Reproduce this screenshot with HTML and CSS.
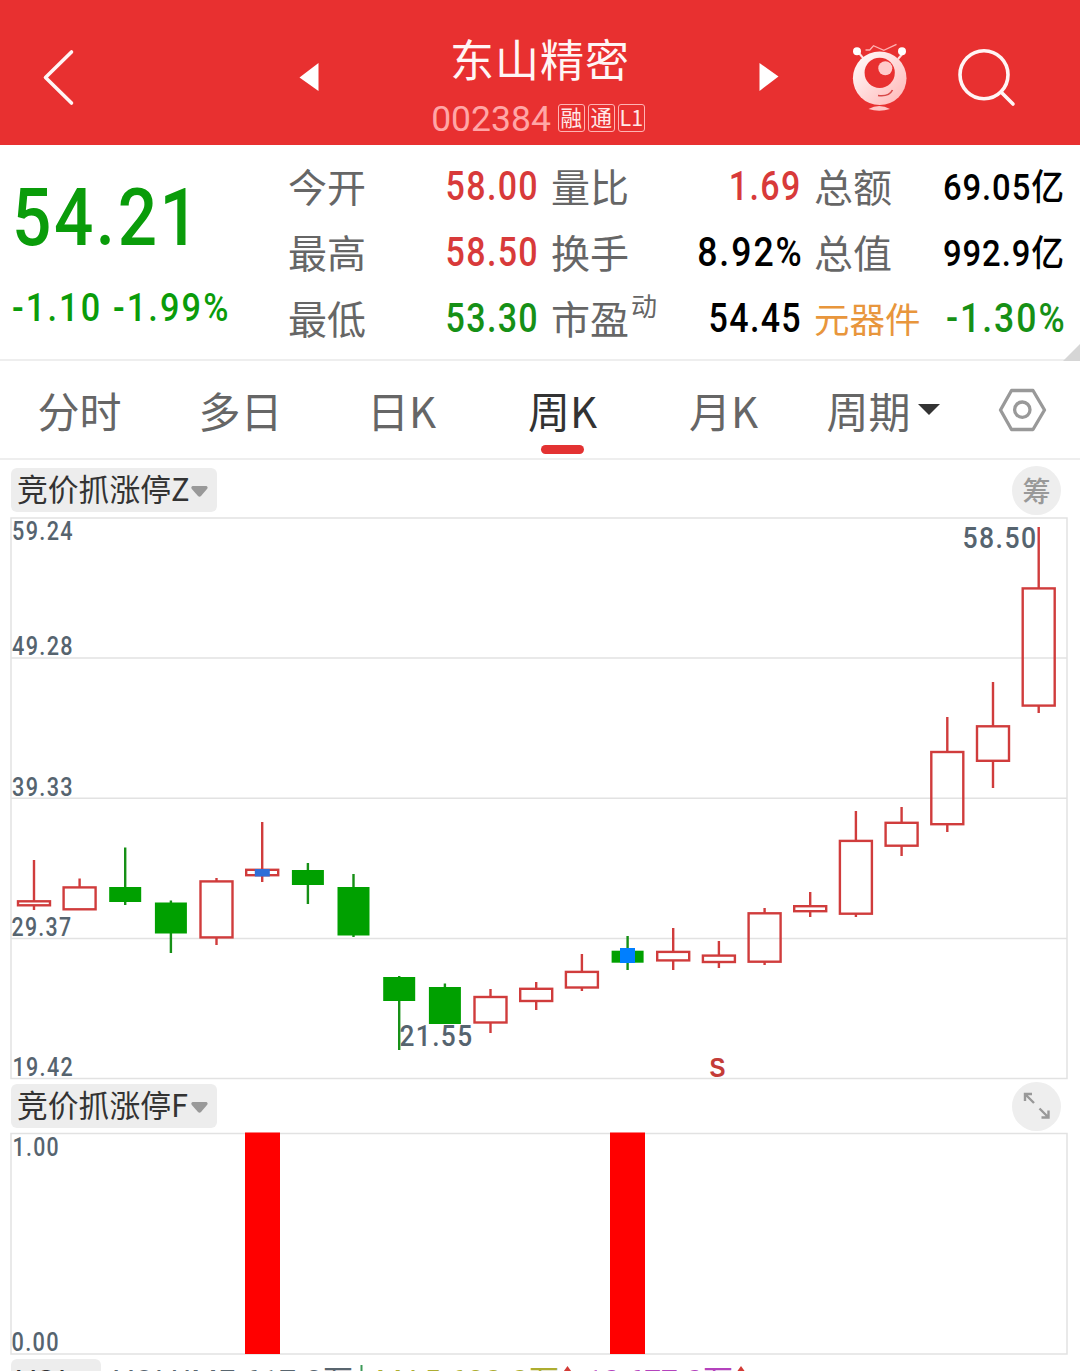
FILE: index.html
```html
<!DOCTYPE html>
<html lang="zh-CN">
<head>
<meta charset="utf-8">
<title>东山精密 002384</title>
<link rel="stylesheet" href="styles.css">
</head>
<body>
<header class="topbar">
  <svg class="back" width="36" height="145" viewBox="40 0 36 145"><path d="M71.5 52 45.5 77.5 71.5 103"/></svg>
  <svg class="prev" width="22" height="145" viewBox="298 0 22 145"><path d="M318.5 63v28L299.5 77.5z"/></svg>
  <div class="heading">
    <h1 class="name">东山精密</h1>
    <div class="sub"><span class="code">002384</span><span class="badge">融</span><span class="badge">通</span><span class="badge">L1</span></div>
  </div>
  <svg class="next" width="22" height="145" viewBox="758 0 22 145"><path d="M759.5 63v28L778.5 76.5z"/></svg>
  <svg class="mascot" width="60" height="145" viewBox="850 0 60 145">
    <defs><linearGradient id="skin" x1="0" y1="0" x2="1" y2="1"><stop offset="0" stop-color="#fff"/><stop offset="1" stop-color="#ffb4b4"/></linearGradient></defs>
    <path d="M865.5 50h4.2l3.8-4.3 10.3 4.6 12.7-6" fill="none" stroke="#ffb0b0" stroke-width="1.3"/>
    <path d="M858 52l6 7M904 52l-6 7" stroke="#ffe0e0" stroke-width="2"/>
    <circle cx="857" cy="51.2" r="4" fill="#fff"/><circle cx="902" cy="51.2" r="4" fill="#fff"/>
    <circle cx="879.7" cy="78.3" r="26.8" fill="url(#skin)"/>
    <circle cx="879.7" cy="72.8" r="15.1" fill="#e83030"/>
    <circle cx="885.3" cy="68.3" r="7" fill="#ffcaca"/>
    <path d="M878 95.5q11 1.5 14.5-5.5" fill="none" stroke="#d84848" stroke-width="1.6"/>
    <path d="M868.5 109q10.8-6 21.5 0-10.7 3.5-21.5 0z" fill="#ffc4c4"/>
  </svg>
  <svg class="search" width="60" height="145" viewBox="956 0 60 145"><circle cx="984" cy="74.7" r="24"/><path d="M1001 92l12 12"/></svg>
</header>

<section class="quote">
  <div class="last">
    <div class="price">54.21</div>
    <div class="change">-1.10 -1.99%</div>
  </div>
  <div class="stats">
    <div class="stat"><span class="label">今开</span><span class="num up">58.00</span></div>
    <div class="stat"><span class="label">量比</span><span class="num up">1.69</span></div>
    <div class="stat"><span class="label">总额</span><span class="num amount">69.05亿</span></div>
    <div class="stat"><span class="label">最高</span><span class="num up">58.50</span></div>
    <div class="stat"><span class="label">换手</span><span class="num percent">8.92%</span></div>
    <div class="stat"><span class="label">总值</span><span class="num amount">992.9亿</span></div>
    <div class="stat"><span class="label">最低</span><span class="num down">53.30</span></div>
    <div class="stat"><span class="label">市盈<sup>动</sup></span><span class="num">54.45</span></div>
    <div class="stat"><span class="label sector">元器件</span><span class="num percent down">-1.30%</span></div>
  </div>
  <i class="corner"></i>
</section>

<nav class="tabs">
  <span class="tab">分时</span>
  <span class="tab">多日</span>
  <span class="tab">日K</span>
  <span class="tab active">周K</span>
  <span class="tab">月K</span>
  <span class="tab period">周期<i class="caret"></i></span>
  <svg class="gear" width="50" height="46" viewBox="997 387 50 46"><path d="M1011.5 390.5h21.5L1044.5 410l-11.5 19.5h-21.5L1000.5 410z"/><circle cx="1022.3" cy="409.7" r="7.7"/></svg>
</nav>

<div class="panel-bar">
  <span class="chip">竞价抓涨停Z<svg width="17" height="11" viewBox="0 0 17 11"><path d="M1.5 0h14q2 1 .5 3L10 10q-1.5 1.5-3 0L.8 3Q-.5 1 1.5 0z"/></svg></span>
  <span class="round">筹</span>
</div>
<svg class="chart" width="1080" height="564" viewBox="0 516 1080 564">
  <g class="grid"><path d="M11 658H1067M11 798.2H1067M11 938.4H1067"/><rect x="11" y="518" width="1056" height="560.5"/></g>
  <g class="axis">
    <text x="12" y="540" textLength="62" lengthAdjust="spacingAndGlyphs">59.24</text>
    <text x="12" y="655" textLength="62" lengthAdjust="spacingAndGlyphs">49.28</text>
    <text x="12" y="796" textLength="62" lengthAdjust="spacingAndGlyphs">39.33</text>
    <text x="11.5" y="936" textLength="61" lengthAdjust="spacingAndGlyphs">29.37</text>
    <text x="12.5" y="1076" textLength="61.5" lengthAdjust="spacingAndGlyphs">19.42</text>
  </g>
  <g class="rise">
    <path d="M34 860V901M34 905V910"/><rect x="18" y="901.3" width="32" height="4"/>
    <path d="M79.6 878.5V888"/><rect x="63.6" y="887.4" width="32" height="21.9"/>
    <path d="M216.5 878V881M216.5 937V945"/><rect x="200.5" y="881.4" width="32" height="56"/>
    <path d="M262.2 822V870M262.2 875V882"/><rect x="246.2" y="869.8" width="32" height="5.4"/>
    <path d="M490.5 989V997M490.5 1022V1033"/><rect x="474.5" y="997" width="32" height="25.5"/>
    <path d="M536.2 982V989M536.2 1001V1010"/><rect x="520.2" y="988.8" width="32" height="12.2"/>
    <path d="M581.9 954V972M581.9 987V991"/><rect x="565.9" y="971.9" width="32" height="15.6"/>
    <path d="M673.2 928V952M673.2 960V970"/><rect x="657.2" y="951.9" width="32" height="8.5"/>
    <path d="M718.9 941V956M718.9 962V968"/><rect x="702.9" y="955.6" width="32" height="6.4"/>
    <path d="M764.6 908V913M764.6 962V965"/><rect x="748.6" y="913.3" width="32" height="48.4"/>
    <path d="M810.2 892V906M810.2 911V917"/><rect x="794.2" y="906.2" width="32" height="5"/>
    <path d="M855.9 811V841M855.9 914V917"/><rect x="839.9" y="840.9" width="32" height="72.8"/>
    <path d="M901.6 807V823M901.6 846V856"/><rect x="885.6" y="822.8" width="32" height="22.9"/>
    <path d="M947.3 717V752M947.3 824V832"/><rect x="931.3" y="752" width="32" height="72.2"/>
    <path d="M993 682V726M993 761V788"/><rect x="977" y="726.3" width="32" height="34.5"/>
    <path d="M1038.7 527V588M1038.7 706V713"/><rect x="1022.7" y="588.4" width="32" height="117.2"/>
  </g>
  <g class="fall">
    <path d="M125.2 847.5V905M170.9 900.5V953M307.9 863V904M353.5 874V937M399.2 976V1050M444.9 983.5V1020M627.6 936V970"/>
    <rect x="109.2" y="887" width="32" height="15"/>
    <rect x="154.9" y="902.5" width="32" height="31"/>
    <rect x="291.9" y="870" width="32" height="15"/>
    <rect x="337.5" y="887" width="32" height="48.5"/>
    <rect x="383.2" y="977" width="32" height="24"/>
    <rect x="428.9" y="987" width="32" height="37"/>
    <rect x="611.6" y="950.7" width="32" height="12"/>
  </g>
  <rect x="254.8" y="869" width="15" height="7.5" fill="#2f6ed8"/>
  <rect x="620" y="948" width="15" height="15" fill="#007fff"/>
  <g class="mark">
    <text x="962.5" y="548" textLength="75" lengthAdjust="spacingAndGlyphs">58.50</text>
    <text x="399.5" y="1046" textLength="74" lengthAdjust="spacingAndGlyphs">21.55</text>
  </g>
  <text class="signal" x="717.5" y="1077" textLength="16" lengthAdjust="spacingAndGlyphs">S</text>
</svg>

<div class="panel-bar second">
  <span class="chip">竞价抓涨停F<svg width="17" height="11" viewBox="0 0 17 11"><path d="M1.5 0h14q2 1 .5 3L10 10q-1.5 1.5-3 0L.8 3Q-.5 1 1.5 0z"/></svg></span>
  <span class="round"><svg width="28" height="28" viewBox="0 0 28 28"><path d="M11 11 2 2M2 9V2h7M16.5 16.5 25.5 25.5M25.5 18.5v7h-7"/></svg></span>
</div>
<svg class="chart" width="1080" height="224" viewBox="0 1132 1080 224">
  <g class="grid"><rect x="11" y="1133.5" width="1056" height="220.5"/></g>
  <path d="M245 1132.5h35v221.5h-35zM610 1132.5h35v221.5h-35z" fill="#f00"/>
  <g class="axis">
    <text x="12.5" y="1156" textLength="47.5" lengthAdjust="spacingAndGlyphs">1.00</text>
    <text x="11.5" y="1351" textLength="48.5" lengthAdjust="spacingAndGlyphs">0.00</text>
  </g>
</svg>

<footer class="volume">
  <span class="vol-chip">VOL</span>
  <svg class="readout" width="680" height="36" viewBox="101 1359 680 36">
    <text x="114" y="1391" textLength="239" fill="#59666f">VOLUME:617.2万</text>
    <path d="M361.5 1365v20" stroke="#3c9a58" stroke-width="2"/>
    <text x="376" y="1391" textLength="183" fill="#adad30">MA5:620.0万</text>
    <path d="M567.5 1366l-5 7h10z" fill="#d33b36"/>
    <text x="586" y="1391" textLength="147" fill="#b443bd">10:677.0万</text>
    <path d="M741 1366l-5 7h10z" fill="#d33b36"/>
  </svg>
</footer>
</body>
</html>
```
FILE: styles.css
```css
* { box-sizing: border-box; }
body {
  margin: 0;
  width: 1080px;
  height: 1371px;
  overflow: hidden;
  background: #fff;
  color: #333;
  font-family: "Noto Sans CJK SC", sans-serif;
}
svg { display: block; flex: none; }

/* title bar */
.topbar { display: flex; height: 145px; padding-left: 40px; background: #e83030; }
.back path, .search circle, .search path { fill: none; stroke: #fff5f5; stroke-width: 3.6; stroke-linecap: round; stroke-linejoin: round; }
.prev { margin-left: 222px; }
.prev path, .next path { fill: #fff; }
.heading { display: flex; flex-direction: column; align-items: center; width: 396px; margin-left: 20px; padding-top: 31px; }
.name { margin: 0 0 0 4px; color: #fff5f5; font-size: 44px; line-height: 54px; font-weight: 400; letter-spacing: 1px; }
.sub { display: flex; align-items: center; gap: 3px; height: 32px; margin-top: 17px; }
.code { margin: 2px 4px 0 0; color: #ffa6a6; font: 35.5px/32px Roboto, sans-serif; }
.badge { width: 27px; height: 28px; border: 1px solid #ffb4b4; border-radius: 3px; color: #ffe9e9; font-size: 21.5px; line-height: 24px; text-align: center; }
.next { margin-left: 22px; }
.mascot { margin-left: 70px; }
.search { margin-left: 46px; }

/* quote summary */
.quote { position: relative; display: flex; height: 216px; padding-top: 8px; border-bottom: 2px solid #eee; }
.last { width: 289px; padding-left: 12px; white-space: nowrap; color: #0a9c0a; font-family: Roboto, sans-serif; font-weight: 500; }
.price { height: 130px; font-size: 80px; line-height: 130px; letter-spacing: 3px; transform: scaleX(.865); transform-origin: left; }
.change { font-size: 38.5px; line-height: 50px; letter-spacing: 2.4px; transform: scaleX(.89); transform-origin: left; }
.stats { display: grid; grid-template-columns: 249px 249px 249px; grid-auto-rows: 66px; column-gap: 14px; }
.stat { display: flex; align-items: center; justify-content: space-between; white-space: nowrap; }
.label { margin: -2px 0 0 -1px; color: #666; font-size: 39px; line-height: 60px; }
.label sup { display: inline-block; height: 26px; margin-left: 2px; font-size: 26px; line-height: 26px; vertical-align: 18px; }
.sector { margin-top: 0; color: #e8963c; font-size: 35.5px; }
.num { margin: 2px -1px 0 0; color: #000; font: 500 40px/60px Roboto, "Noto Sans CJK SC", sans-serif; letter-spacing: 1.6px; transform: scaleX(.85); transform-origin: right; }
.percent { margin-right: -3px; letter-spacing: 2.2px; transform: scaleX(.89); }
.amount { margin-top: 3px; font-size: 36px; font-weight: 500; letter-spacing: 1px; transform: scaleX(.91); }
.up { color: #d83a3a; }
.down { color: #169016; }
.corner { position: absolute; right: 0; bottom: -2px; border-left: 17px solid transparent; border-bottom: 17px solid #d6d6d6; }

/* chart period tabs */
.tabs { display: flex; align-items: center; height: 99px; border-bottom: 2px solid #eee; color: #666; font-size: 42px; line-height: 60px; }
.tab { width: 161px; padding: 1px 2px 0 0; text-align: center; }
.active { position: relative; color: #333; }
.active::after { content: ""; position: absolute; left: 58px; bottom: -14px; width: 43px; height: 9px; border-radius: 5px; background: #e33232; }
.period { display: flex; align-items: center; justify-content: center; gap: 7px; width: 165px; padding-right: 9px; }
.caret { margin-top: -2px; border: 11px solid transparent; border-top-color: #333; border-bottom: 0; }
.gear { margin-left: 27px; }
.gear path, .gear circle { fill: none; stroke: #999; stroke-width: 3.3; stroke-linejoin: round; }

/* indicator panels */
.panel-bar { display: flex; align-items: center; justify-content: space-between; height: 56px; padding: 4px 19px 0 11px; }
.panel-bar.second { height: 52px; padding-top: 0; }
.chip { display: flex; align-items: center; justify-content: space-between; width: 206px; height: 44px; padding: 0 9px 4px 6px; border-radius: 6px; background: #ededed; font-size: 30.8px; line-height: 40px; white-space: nowrap; }
.chip svg { margin-top: 7px; fill: #999; }
.round { display: flex; align-items: center; justify-content: center; width: 49px; height: 49px; border-radius: 50%; background: #eee; color: #999; font-size: 28px; font-weight: 500; line-height: 46px; }
.round path { fill: none; stroke: #999; stroke-width: 2.4; }
.chart { overflow: visible; }
.grid path, .grid rect { fill: none; stroke: #e2e2e2; stroke-width: 1.5; }
.axis, .mark { fill: #56646f; font: 500 25.5px Roboto, sans-serif; letter-spacing: 1.6px; }
.mark { font-size: 30px; }
.rise path, .rise rect { fill: none; stroke: #d03c3c; stroke-width: 2.4; }
.fall path { stroke: #169016; stroke-width: 2.4; }
.fall rect { fill: #00a000; }
.signal { fill: #c43c38; font: 700 27px "Liberation Sans", sans-serif; text-anchor: middle; }

/* volume strip */
.volume { display: flex; height: 36px; padding: 3px 0 0 11px; }
.vol-chip { width: 90px; height: 36px; padding-left: 6px; border-radius: 6px; background: #ededed; color: #333; font-size: 31px; line-height: 41px; }
.readout text { font: 30px Roboto, "Noto Sans CJK SC", sans-serif; }
```
